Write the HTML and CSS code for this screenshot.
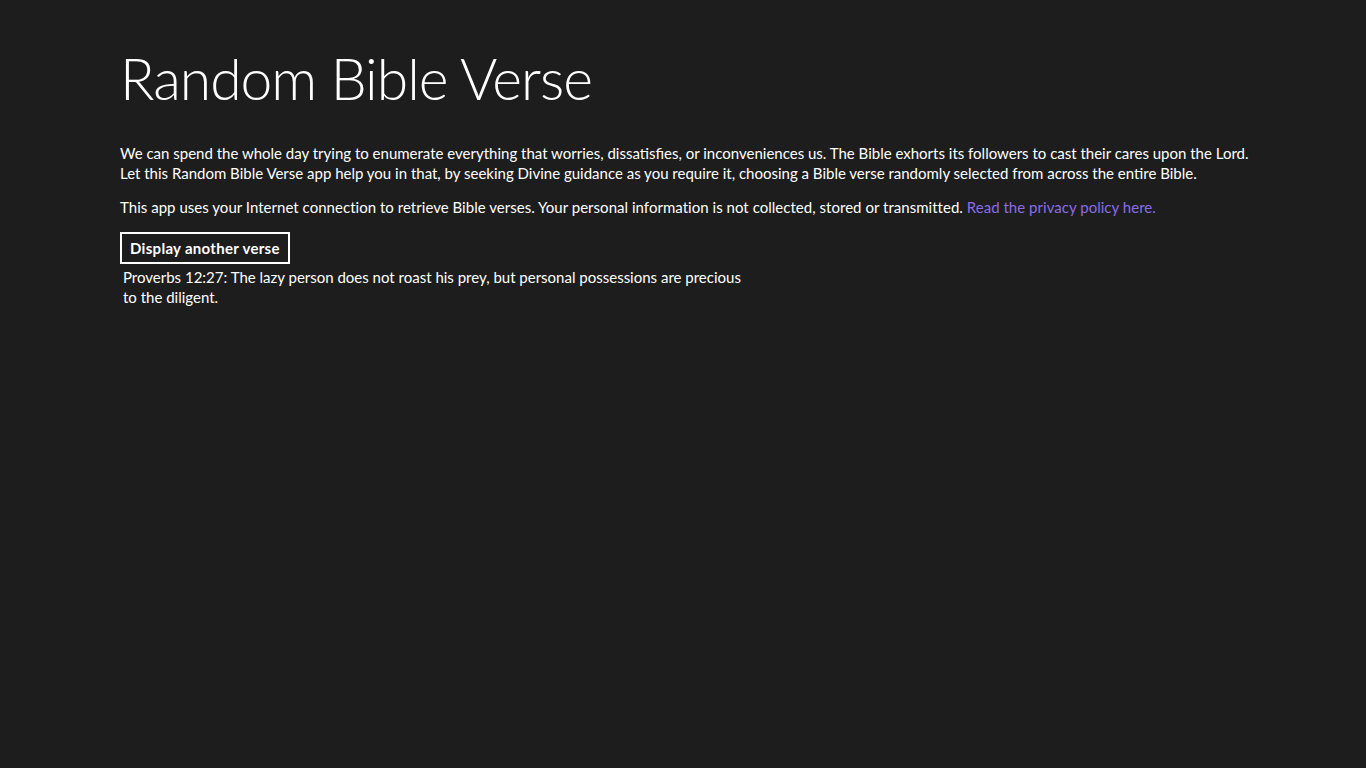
FILE: index.html
```html
<!DOCTYPE html>
<html lang="en">
<head>
<meta charset="utf-8">
<title>Random Bible Verse</title>
<link rel="stylesheet" href="styles.css">
</head>
<body>
<main class="page">
  <h1 class="title">Random Bible Verse</h1>
  <p class="intro">We can spend the whole day trying to enumerate everything that worries, dissatisfies, or inconveniences us. The Bible exhorts its followers to cast their cares upon the Lord. Let this Random Bible Verse app help you in that, by seeking Divine guidance as you require it, choosing a Bible verse randomly selected from across the entire Bible.</p>
  <p class="privacy">This app uses your Internet connection to retrieve Bible verses. Your personal information is not collected, stored or transmitted. <a class="link" href="#">Read the privacy policy here.</a></p>
  <button class="btn" type="button">Display another verse</button>
  <p class="verse">Proverbs 12:27: The lazy person does not roast his prey, but personal possessions are precious to the diligent.</p>
</main>
</body>
</html>
```
FILE: styles.css
```css
html, body {
  margin: 0;
  padding: 0;
  background: #1d1d1d;
  height: 100%;
}
body {
  font-family: "Lato", "Open Sans", sans-serif;
  color: #ffffff;
}
.page {
  padding: 42px 0 0 120px;
  width: 1140px;
}
.title {
  margin: 0;
  font-weight: 300;
  font-size: 57px;
  line-height: 72px;
  letter-spacing: -1px;
}
.intro {
  margin: 29px 0 0;
  font-size: 15px;
  line-height: 20px;
  width: 1140px;
}
.privacy {
  margin: 14px 0 0;
  font-size: 15px;
  line-height: 20px;
  letter-spacing: 0.03px;
}
.link {
  color: #8a6ce6;
  text-decoration: none;
}
.btn {
  margin-top: 15px;
  display: block;
  background: transparent;
  border: 2px solid #ffffff;
  color: #ffffff;
  font-family: inherit;
  font-weight: 700;
  font-size: 15px;
  letter-spacing: 0.3px;
  height: 32px;
  padding: 0 8px;
}
.verse {
  margin: 3px 0 0 3px;
  width: 625px;
  font-size: 15px;
  line-height: 20px;
}
```
